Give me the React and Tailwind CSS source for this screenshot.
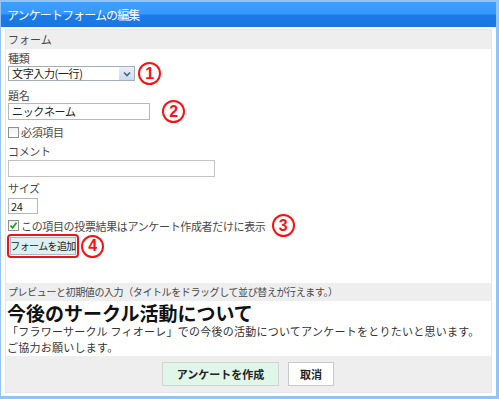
import React from 'react';

// red numbered marker used to annotate the form
function Marker({ n, className = '' }) {
  return (
    <span
      className={`flex h-[23px] w-[23px] shrink-0 items-center justify-center rounded-full border-2 border-[#ff1010] bg-white font-['Liberation_Sans',sans-serif] text-[16px] font-bold leading-none text-[#ff1010] ${className}`}
    >
      {n}
    </span>
  );
}

function CheckBox({ checked }) {
  return (
    <span className="flex h-[11px] w-[11px] shrink-0 items-center justify-center border border-[#8e8f8f] bg-[linear-gradient(#f0f0f0,#ffffff)]">
      {checked && (
        <svg width="9" height="9" viewBox="0 0 9 9">
          <path d="M1.5 4.5 L3.5 6.8 L7.5 1.8" fill="none" stroke="#2a9d2a" strokeWidth="1.8" />
        </svg>
      )}
    </span>
  );
}

export default function App() {
  return (
    <div className="flex h-[399px] w-[499px] flex-col overflow-hidden border-t-2 border-b-[3px] border-l border-r-[3px] border-[#93c4f3] bg-white font-['Noto_Sans_CJK_JP',sans-serif] text-[11px] text-[#484848]">
      {/* title bar */}
      <div className="flex h-[25px] shrink-0 items-center bg-[linear-gradient(#3e9eff_0%,#3599ff_48%,#1c7be6_52%,#1a77e0_100%)] px-[6px] text-[12px] tracking-[-0.9px] text-white">
        アンケートフォームの編集
      </div>

      <div className="mx-[4px] mb-[3px] mt-[2px] flex flex-1 flex-col border border-[#e6e6e6]">
        <div className="flex h-[19px] shrink-0 items-center bg-[#eeeeee] px-[2px] leading-none">フォーム</div>

        {/* form body */}
        <div className="flex flex-col px-[2px] pt-[1px] leading-[16px] tracking-[-0.35px]">
          <div className="h-[16px]">種類</div>
          <div className="flex h-[15px] items-center">
            <div className="flex h-[15px] w-[127px] items-center justify-between border border-[#a6adb6] bg-white pl-[3px] text-[#222]">
              <span className="leading-none">文字入力(一行)</span>
              <span className="flex h-[13px] w-[15px] items-center justify-center bg-[linear-gradient(#e8f0fa,#c9daf0)]">
                <svg width="8" height="6" viewBox="0 0 8 6">
                  <path d="M1 1.5 L4 4.5 L7 1.5" fill="none" stroke="#4d6185" strokeWidth="1.6" />
                </svg>
              </span>
            </div>
            <Marker n="1" className="ml-[3px]" />
          </div>

          <div className="mt-[6px] h-[16px]">題名</div>
          <div className="flex h-[17px] items-center">
            <div className="flex h-[17px] w-[142px] items-center border border-[#b7b7b7] bg-white px-[3px] leading-none text-[#222]">
              ニックネーム
            </div>
            <Marker n="2" className="ml-[12px]" />
          </div>

          <div className="mt-[1px] flex h-[22px] items-center gap-[2px]">
            <CheckBox />
            <span>必須項目</span>
          </div>

          <div className="h-[16px]">コメント</div>
          <div className="mt-[1px] h-[17px] w-[207px] border border-[#c3c3c3] bg-white"></div>

          <div className="mt-[3px] h-[16px]">サイズ</div>
          <div className="mt-[2px] flex h-[16px] w-[30px] items-center border border-[#b7b7b7] bg-white px-[2px] leading-none text-[#222]">
            24
          </div>

          <div className="mt-[3px] flex h-[17px] items-center gap-[2px]">
            <CheckBox checked />
            <span>この項目の投票結果はアンケート作成者だけに表示</span>
            <Marker n="3" className="ml-[4px]" />
          </div>

          <div className="flex h-[24px] items-center">
            <div className="-ml-[1px] flex h-[24px] w-[72px] items-center justify-center rounded-[4px] border-2 border-[#e8141e]">
              <div className="flex h-[18px] w-[66px] items-center justify-center whitespace-nowrap border border-[#a9b9c3] bg-[#dcf0f4] text-[10px] leading-none tracking-[-0.6px] text-[#222]">
                フォームを追加
              </div>
            </div>
            <Marker n="4" className="ml-[2px]" />
          </div>
          <div className="h-[25px]"></div>
        </div>

        {/* preview */}
        <div className="flex h-[18px] shrink-0 items-center bg-[#eeeeee] px-[2px] text-[10px] leading-none tracking-[-0.4px]">
          プレビューと初期値の入力（タイトルをドラッグして並び替えが行えます。）
        </div>
        <div className="flex flex-col px-[1px] pb-[1px]">
          <div className="flex h-[22px] items-center whitespace-nowrap text-[19px] font-bold leading-none text-[#111]">
            今後のサークル活動について
          </div>
          <div className="flex h-[16px] items-center whitespace-nowrap text-[11px] leading-none tracking-[0.25px] text-[#333]">
            「フラワーサークル フィオーレ」での今後の活動についてアンケートをとりたいと思います。
          </div>
          <div className="flex h-[16px] items-center whitespace-nowrap text-[11px] leading-none tracking-[0.25px] text-[#333]">
            ご協力お願いします。
          </div>
        </div>
        <div className="flex flex-1 items-start justify-center gap-[9px] bg-[#eeeeee] pt-[6px]">
          <button className="ml-[-1px] flex h-[24px] w-[117px] items-center justify-center border border-[#cfd6d1] bg-[#dff6e9] text-[11px] font-bold text-[#222]">
            アンケートを作成
          </button>
          <button className="flex h-[24px] w-[46px] items-center justify-center border border-[#c9c9c9] bg-white text-[11px] font-bold text-[#222]">
            取消
          </button>
        </div>
      </div>
    </div>
  );
}
